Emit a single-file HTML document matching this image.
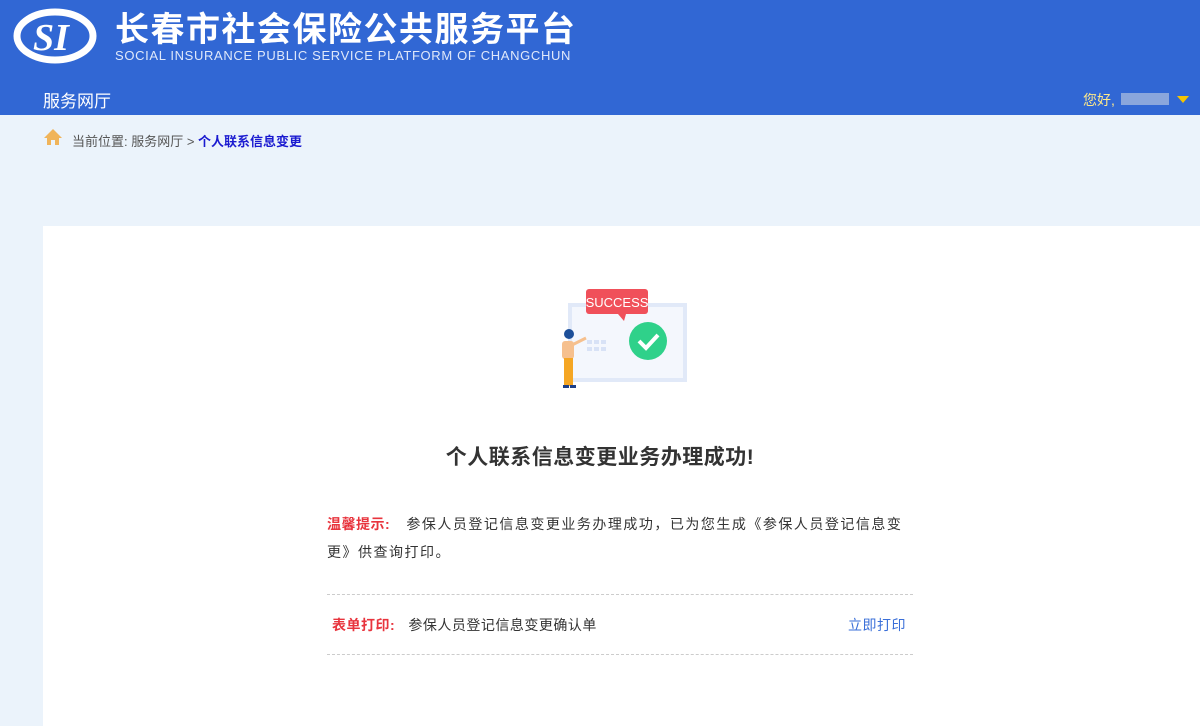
<!DOCTYPE html>
<html><head><meta charset="utf-8"><style>
*{margin:0;padding:0;box-sizing:border-box}
body{width:1200px;height:722px;overflow:hidden;background:#ebf3fb;font-family:"Liberation Sans","Noto Sans CJK SC",sans-serif;position:relative}
.hd{position:absolute;left:0;top:0;width:1200px;height:115px;background:#3167d4}
.t1{position:absolute;left:115px;top:2px;color:#fff;font-size:34px;font-weight:bold;letter-spacing:1.5px}
.t2{position:absolute;left:115px;top:48px;color:#dfe8fa;font-size:13px;letter-spacing:.65px}
.nav{position:absolute;left:43px;top:87px;color:#fff;font-size:17px}
.hi{position:absolute;left:1083px;top:90px;color:#ffe98a;font-size:14px}
.blur{position:absolute;left:1121px;top:93px;width:48px;height:12px;background:#8aa6dc}
.tri{position:absolute;left:1177px;top:96px;border-left:6px solid transparent;border-right:6px solid transparent;border-top:7px solid #f5c400}
.bc{position:absolute;left:72px;top:131px;font-size:13px;color:#555}
.bc b{color:#1a1ad0}
.panel{position:absolute;left:43px;top:226px;width:1157px;height:500px;background:#fff}
.title{position:absolute;left:0;width:1200px;top:441px;text-align:center;font-size:21px;font-weight:bold;color:#333;letter-spacing:.5px}
.tip{position:absolute;left:327px;top:510px;width:600px;font-size:14px;line-height:28px;color:#333;letter-spacing:1.5px;white-space:nowrap}
.tip .red{letter-spacing:.5px}
.red{color:#e8343d;font-weight:bold}
.dash{position:absolute;left:327px;width:586px;border-top:1px dashed #ccc}
.row{position:absolute;left:332px;top:615px;font-size:14px;color:#333;letter-spacing:.5px}
.lnk{position:absolute;left:848px;top:615px;font-size:14px;color:#3a6fd8;letter-spacing:.5px}
</style></head><body>
<div class="hd">
<svg style="position:absolute;left:13px;top:8px" width="84" height="56" viewBox="0 0 84 56"><ellipse cx="42" cy="28" rx="38" ry="24" fill="none" stroke="#fff" stroke-width="7"/><text x="20" y="42" font-family="Liberation Serif" font-style="italic" font-weight="bold" font-size="38" fill="#fff">SI</text></svg>
<div class="t1">长春市社会保险公共服务平台</div>
<div class="t2">SOCIAL INSURANCE PUBLIC SERVICE PLATFORM OF CHANGCHUN</div>
<div class="nav">服务网厅</div>
<div class="hi">您好,</div><div class="blur"></div><div class="tri"></div>
</div>
<svg style="position:absolute;left:43px;top:128px" width="20" height="18" viewBox="0 0 20 18"><path d="M10 1 L19 10 L16 10 L16 17 L12 17 L12 12 L8 12 L8 17 L4 17 L4 10 L1 10Z" fill="#f0b45a"/></svg>
<div class="bc">当前位置: 服务网厅 &gt; <b>个人联系信息变更</b></div>
<div class="panel"></div>
<svg style="position:absolute;left:530px;top:285px" width="180" height="110" viewBox="0 0 180 110">
<rect x="40" y="20" width="115" height="75" fill="#f4f7fd" stroke="#e1e9f8" stroke-width="4"/>
<rect x="56" y="4" width="62" height="25" rx="3" fill="#f0505a"/>
<path d="M88 29 L94 36 L96 29Z" fill="#f0505a"/>
<text x="87" y="22" text-anchor="middle" font-size="13" fill="#fff" font-family="Liberation Sans">SUCCESS</text>
<circle cx="118" cy="56" r="19" fill="#2fd18a"/>
<path d="M109 56 L116 63 L128 50" fill="none" stroke="#fff" stroke-width="4"/>
<g fill="#d8e2f6"><rect x="57" y="55" width="5" height="4"/><rect x="64" y="55" width="5" height="4"/><rect x="71" y="55" width="5" height="4"/><rect x="57" y="62" width="5" height="4"/><rect x="64" y="62" width="5" height="4"/><rect x="71" y="62" width="5" height="4"/></g>
<circle cx="39" cy="49" r="5" fill="#1d4f99"/>
<rect x="32" y="56" width="12" height="18" rx="3" fill="#f6c08e"/>
<path d="M42 60 L56 53" stroke="#f6c08e" stroke-width="3"/>
<rect x="34" y="73" width="9" height="28" fill="#f5a623"/>
<rect x="33" y="100" width="6" height="3" fill="#1d3f88"/><rect x="40" y="100" width="6" height="3" fill="#1d3f88"/>
</svg>
<div class="title">个人联系信息变更业务办理成功!</div>
<div class="tip"><span class="red">温馨提示:</span>&nbsp;&nbsp; 参保人员登记信息变更业务办理成功，已为您生成《参保人员登记信息变<br>更》供查询打印。</div>
<div class="dash" style="top:594px"></div>
<div class="row"><span class="red">表单打印:</span>&nbsp;&nbsp; 参保人员登记信息变更确认单</div>
<div class="lnk">立即打印</div>
<div class="dash" style="top:654px"></div>
</body></html>
